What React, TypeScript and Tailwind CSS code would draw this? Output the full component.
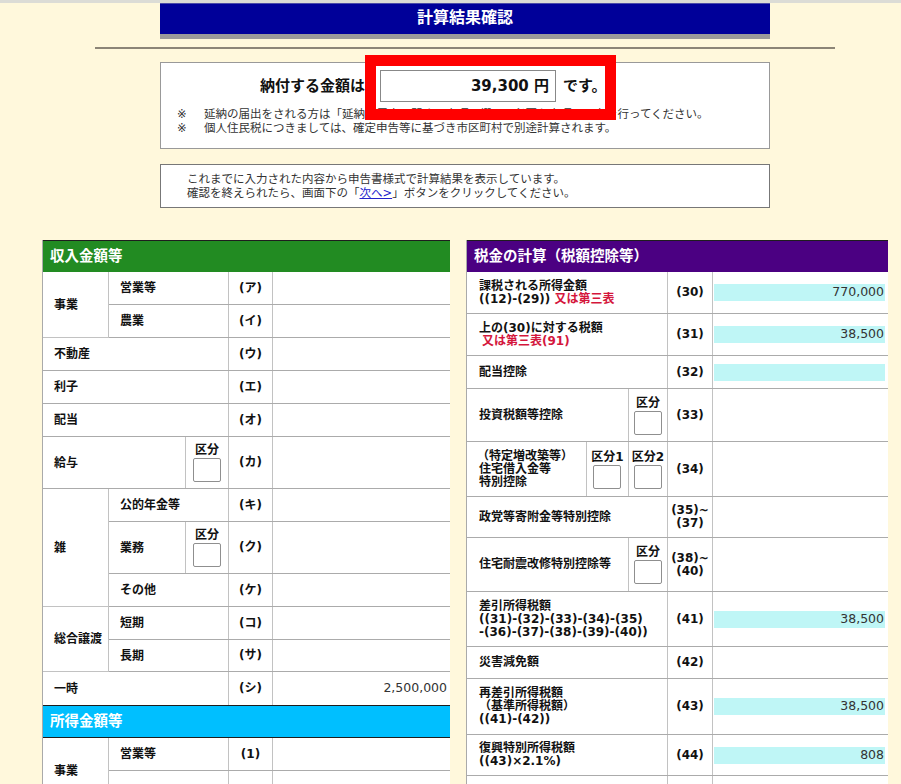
import React from "react";

const HL = "border-b border-[#ababab]";
const VL = "border-r border-[#c2c2c2]";

function Kubun({ label = "区分" }: { label?: string }) {
  return (
    <div className="flex flex-col items-center justify-center gap-[1px]">
      <span className="text-[12px] font-bold leading-[14px]">{label}</span>
      <div className="w-[28px] h-[24px] border border-[#8f8f8f] bg-white rounded-[2px]" />
    </div>
  );
}

function Code({ c, w }: { c: React.ReactNode; w: string }) {
  return (
    <div className={`${w} shrink-0 ${VL} flex items-center justify-center text-center font-bold text-[12px] leading-[13px]`}>
      {c}
    </div>
  );
}

function LVal({ v }: { v?: string }) {
  return (
    <div className="flex-1 flex items-center justify-end pr-[3px] text-[12.5px] text-[#333] font-normal">
      {v}
    </div>
  );
}

function LRow({
  hc,
  lw,
  label,
  code,
  value,
  kubun,
}: {
  hc: string;
  lw: string;
  label: string;
  code: string;
  value?: string;
  kubun?: boolean;
}) {
  return (
    <div className={`flex ${hc} ${HL}`}>
      <div className={`${lw} shrink-0 ${VL} flex items-center pl-[11px] font-bold text-[12px]`}>{label}</div>
      {kubun && (
        <div className={`w-[43px] shrink-0 ${VL} flex items-center justify-center`}>
          <Kubun />
        </div>
      )}
      <Code c={code} w="w-[44px]" />
      <LVal v={value} />
    </div>
  );
}

function LGroup({ label, children }: { label: string; children: React.ReactNode }) {
  return (
    <div className="flex">
      <div className={`w-[66px] shrink-0 ${VL} ${HL} flex items-center pl-[11px] font-bold text-[12px]`}>{label}</div>
      <div className="flex-1 flex flex-col">{children}</div>
    </div>
  );
}

function RVal({ v, cyan }: { v?: string; cyan?: boolean }) {
  return (
    <div className="flex-1 flex items-center pl-[1px] pr-[3px]">
      {cyan && (
        <div className="w-full h-[17px] bg-[#bff6f6] flex items-center justify-end pr-[1px] text-[12.5px] text-[#333]">
          {v}
        </div>
      )}
    </div>
  );
}

function RRow({
  hc,
  lw,
  label,
  code,
  value,
  cyan,
  extra,
}: {
  hc: string;
  lw: string;
  label: React.ReactNode;
  code: React.ReactNode;
  value?: string;
  cyan?: boolean;
  extra?: React.ReactNode;
}) {
  return (
    <div className={`flex ${hc} ${HL}`}>
      <div className={`${lw} shrink-0 ${VL} flex flex-col justify-center pl-[12px] font-bold text-[12px] leading-[13px]`}>
        {label}
      </div>
      {extra}
      <Code c={code} w="w-[45px]" />
      <RVal v={value} cyan={cyan} />
    </div>
  );
}

const Red = ({ children }: { children: React.ReactNode }) => (
  <span className="text-[#d4163c]">{children}</span>
);

export default function App() {
  return (
    <div className="w-full min-h-screen overflow-hidden bg-[#fff8dc] font-['DejaVu_Sans','Noto_Sans_CJK_JP',sans-serif] text-[#111]">
      <div className="relative w-[930px]">
        <div className="h-[3px] bg-[#dcdcd6]" />
        <div className="mx-auto w-[610px] h-[36px] bg-[#000099] border-t border-[#4a4aa8] border-b-[5px] border-b-[#9a9a9a] flex items-center justify-center pb-[2px] text-white font-bold text-[16px]">
          計算結果確認
        </div>
        <div className="mx-auto mt-[8px] w-[740px] h-[2px] bg-[#8c8577]" />

        <div className="mx-auto mt-[13px] w-[610px] h-[87px] border border-[#999] bg-white">
          <div className="flex items-center pt-[7px]">
            <div className="w-[204px] text-right font-bold text-[15px]">納付する金額は</div>
            <div className="ml-[15px] w-[176px] h-[32px] border border-[#888] flex items-center justify-end pr-[6px] font-bold text-[15px]">
              39,300 円
            </div>
            <div className="ml-[7px] font-bold text-[15px]">です。</div>
          </div>
          <div className="mt-[5px] pl-[16px] text-[11.5px] leading-[14px] text-[#333]">
            <div className="flex">
              <span className="w-[27px]">※</span>
              <span>延納の届出をされる方は「延納の届出に関する事項」欄で、必要な事項の入力を行ってください。</span>
            </div>
            <div className="flex">
              <span className="w-[27px]">※</span>
              <span>個人住民税につきましては、確定申告等に基づき市区町村で別途計算されます。</span>
            </div>
          </div>
        </div>

        <div className="mx-auto mt-[15px] w-[610px] h-[44px] border border-[#777] bg-white pl-[26px] pt-[7px] text-[11.5px] leading-[14px] text-[#333]">
          <div>これまでに入力された内容から申告書様式で計算結果を表示しています。</div>
          <div>
            確認を終えられたら、画面下の「<span className="text-[#2222cc] underline">次へ&gt;</span>」ボタンをクリックしてください。
          </div>
        </div>

        <div className="absolute left-[365px] top-[55px] w-[251px] h-[65px] border-[11px] border-[#ff0000] pointer-events-none" />

        <div className="mt-[32px] ml-[42px] flex gap-[16px] items-start">
          {/* Left panel */}
          <div className="w-[408px] bg-white border-l border-[#aaa]">
            <div className="h-[32px] bg-[#228b22] border-t border-[#1e1e1e] flex items-center pl-[7px] text-white font-bold text-[14.5px]">
              収入金額等
            </div>
            <LGroup label="事業">
              <LRow hc="h-[33px]" lw="w-[120px]" label="営業等" code="(ア)" />
              <LRow hc="h-[33px]" lw="w-[120px]" label="農業" code="(イ)" />
            </LGroup>
            <LRow hc="h-[33px]" lw="w-[186px]" label="不動産" code="(ウ)" />
            <LRow hc="h-[33px]" lw="w-[186px]" label="利子" code="(エ)" />
            <LRow hc="h-[33px]" lw="w-[186px]" label="配当" code="(オ)" />
            <LRow hc="h-[52px]" lw="w-[143px]" label="給与" code="(カ)" kubun />
            <LGroup label="雑">
              <LRow hc="h-[33px]" lw="w-[120px]" label="公的年金等" code="(キ)" />
              <LRow hc="h-[52px]" lw="w-[77px]" label="業務" code="(ク)" kubun />
              <LRow hc="h-[33px]" lw="w-[120px]" label="その他" code="(ケ)" />
            </LGroup>
            <LGroup label="総合譲渡">
              <LRow hc="h-[33px]" lw="w-[120px]" label="短期" code="(コ)" />
              <LRow hc="h-[32px]" lw="w-[120px]" label="長期" code="(サ)" />
            </LGroup>
            <div className="flex h-[33px]">
              <div className={`w-[186px] shrink-0 ${VL} flex items-center pl-[11px] font-bold text-[12px]`}>一時</div>
              <Code c="(シ)" w="w-[44px]" />
              <LVal v="2,500,000" />
            </div>
            <div className="h-[33px] bg-[#00bfff] border-y border-[#1e1e1e] flex items-center pl-[7px] text-white font-bold text-[14.5px]">
              所得金額等
            </div>
            <LGroup label="事業">
              <LRow hc="h-[33px]" lw="w-[120px]" label="営業等" code="(1)" />
              <LRow hc="h-[33px]" lw="w-[120px]" label="" code="" />
            </LGroup>
          </div>

          {/* Right panel */}
          <div className="w-[422px] bg-white border-l border-[#aaa]">
            <div className="h-[32px] bg-[#4b0082] border-t border-[#1e1e1e] flex items-center pl-[7px] text-white font-bold text-[14.5px]">
              税金の計算（税額控除等）
            </div>
            <RRow
              hc="h-[42px]"
              lw="w-[201px]"
              label={
                <>
                  <div>課税される所得金額</div>
                  <div>
                    ((12)-(29)) <Red>又は第三表</Red>
                  </div>
                </>
              }
              code="(30)"
              value="770,000"
              cyan
            />
            <RRow
              hc="h-[42px]"
              lw="w-[201px]"
              label={
                <>
                  <div>上の(30)に対する税額</div>
                  <div className="pl-[3px]">
                    <Red>又は第三表(91)</Red>
                  </div>
                </>
              }
              code="(31)"
              value="38,500"
              cyan
            />
            <RRow hc="h-[33px]" lw="w-[201px]" label="配当控除" code="(32)" cyan />
            <RRow
              hc="h-[53px]"
              lw="w-[162px]"
              label="投資税額等控除"
              code="(33)"
              extra={
                <div className={`w-[39px] shrink-0 ${VL} flex items-center justify-center`}>
                  <Kubun />
                </div>
              }
            />
            <RRow
              hc="h-[55px]"
              lw="w-[120px]"
              label={
                <>
                  <div className="-ml-[2px]">（特定増改築等）</div>
                  <div>住宅借入金等</div>
                  <div>特別控除</div>
                </>
              }
              code="(34)"
              extra={
                <>
                  <div className={`w-[42px] shrink-0 ${VL} flex items-center justify-center`}>
                    <Kubun label="区分1" />
                  </div>
                  <div className={`w-[39px] shrink-0 ${VL} flex items-center justify-center`}>
                    <Kubun label="区分2" />
                  </div>
                </>
              }
            />
            <RRow
              hc="h-[41px]"
              lw="w-[201px]"
              label="政党等寄附金等特別控除"
              code={
                <div className="leading-[13px]">
                  (35)~
                  <br />
                  (37)
                </div>
              }
            />
            <RRow
              hc="h-[54px]"
              lw="w-[162px]"
              label="住宅耐震改修特別控除等"
              code={
                <div className="leading-[13px]">
                  (38)~
                  <br />
                  (40)
                </div>
              }
              extra={
                <div className={`w-[39px] shrink-0 ${VL} flex items-center justify-center`}>
                  <Kubun />
                </div>
              }
            />
            <RRow
              hc="h-[55px]"
              lw="w-[201px]"
              label={
                <>
                  <div>差引所得税額</div>
                  <div>((31)-(32)-(33)-(34)-(35)</div>
                  <div>-(36)-(37)-(38)-(39)-(40))</div>
                </>
              }
              code="(41)"
              value="38,500"
              cyan
            />
            <RRow hc="h-[32px]" lw="w-[201px]" label="災害減免額" code="(42)" />
            <RRow
              hc="h-[56px]"
              lw="w-[201px]"
              label={
                <>
                  <div>再差引所得税額</div>
                  <div>（基準所得税額）</div>
                  <div>((41)-(42))</div>
                </>
              }
              code="(43)"
              value="38,500"
              cyan
            />
            <RRow
              hc="h-[41px]"
              lw="w-[201px]"
              label={
                <>
                  <div>復興特別所得税額</div>
                  <div>((43)×2.1%)</div>
                </>
              }
              code="(44)"
              value="808"
              cyan
            />
            <RRow hc="h-[41px]" lw="w-[201px]" label="" code="" />
          </div>
        </div>
      </div>
    </div>
  );
}
